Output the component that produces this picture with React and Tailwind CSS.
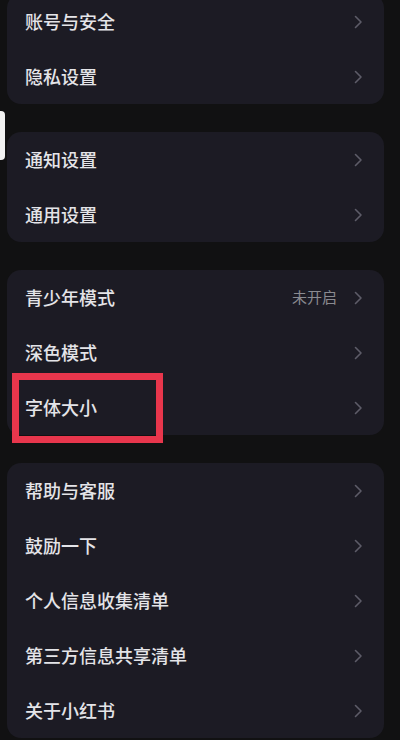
const groups = [
  [{ label: "账号与安全" }, { label: "隐私设置" }],
  [{ label: "通知设置" }, { label: "通用设置" }],
  [{ label: "青少年模式", value: "未开启" }, { label: "深色模式" }, { label: "字体大小" }],
  [
    { label: "帮助与客服" },
    { label: "鼓励一下" },
    { label: "个人信息收集清单" },
    { label: "第三方信息共享清单" },
    { label: "关于小红书" },
  ],
]

function Chevron() {
  return (
    <svg width="9" height="14" viewBox="0 0 9 14" fill="none">
      <polyline
        points="1.5,1.5 7,7 1.5,12.5"
        stroke="#5d5c68"
        strokeWidth="1.6"
        strokeLinecap="round"
        strokeLinejoin="round"
      />
    </svg>
  )
}

export default function App() {
  return (
    <div
      className="relative h-[740px] w-[400px] overflow-hidden bg-[#111112]"
      style={{ fontFamily: '"Noto Sans CJK SC", "Noto Sans", sans-serif' }}
    >
      <div className="-mt-[6px] flex flex-col gap-[28px] pl-[7px] pr-[16px]">
        {groups.map((rows, i) => (
          <div key={i} className="rounded-[14px] bg-[#1c1b24]">
            {rows.map((row) => (
              <div
                key={row.label}
                className="flex h-[55px] items-center justify-between pl-[18px] pr-[21px]"
              >
                <span className="text-[18px] font-medium text-[#e4e4e8]">{row.label}</span>
                <div className="flex items-center gap-[17px]">
                  {row.value && (
                    <span className="text-[15px] text-[#8a8a90]">{row.value}</span>
                  )}
                  <Chevron />
                </div>
              </div>
            ))}
          </div>
        ))}
      </div>

      {/* screen edge handle */}
      <div className="absolute left-0 top-[111px] h-[49px] w-[5px] rounded-r-[4px] bg-[#f2f2f2]" />

      {/* highlight box */}
      <div className="absolute left-[12px] top-[373px] h-[70px] w-[151px] border-[7px] border-[#e8364c]" />
    </div>
  )
}
